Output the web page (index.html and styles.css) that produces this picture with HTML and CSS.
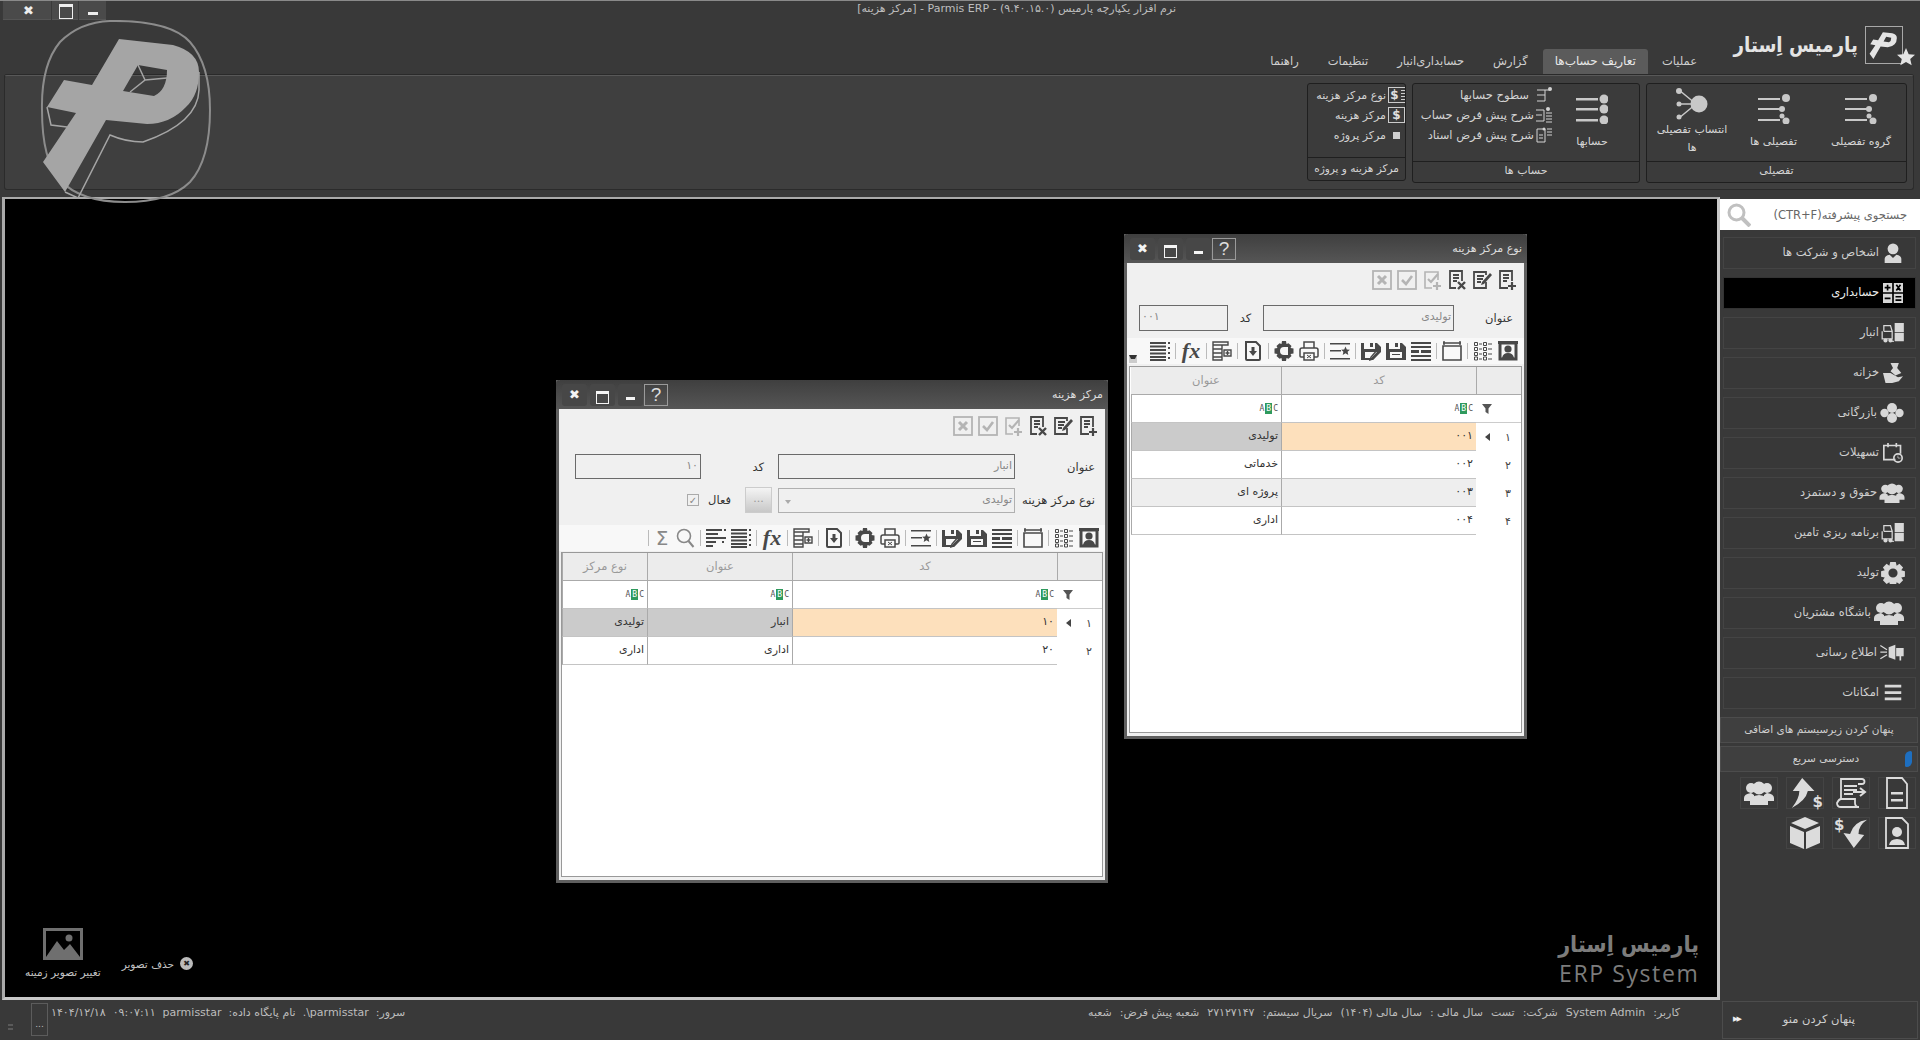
FILE: index.html
```
<!DOCTYPE html>
<html lang="fa" dir="rtl">
<head>
    <meta charset="utf-8">
    <title>Parmis ERP</title>
    <link rel="stylesheet" href="styles.css">
</head>
<body>
    <svg class="defs" width="0" height="0">
        <!-- shared icons -->
        <symbol id="p-mark" viewBox="40 20 171 183"><path fill-rule="evenodd" d="M119 39L173 45Q199 52 199 72Q199 95 186 107Q170 124 147 124L106 120L65 192L43 162L76 113L47 107L64 80L92 85ZM138 65L123 91L154 96Q167 90 167 70Z"/></symbol>
        <symbol id="doc-new" viewBox="0 0 20 20"><path fill="none" stroke="currentColor" stroke-width="1.8" d="M11 18H3V1h12v10M6 5h6M6 8h6M6 11h4"/><path fill="none" stroke="currentColor" stroke-width="2.2" d="M15 12v8M11 16h8"/></symbol>
        <symbol id="doc-edit" viewBox="0 0 20 20"><path fill="none" stroke="currentColor" stroke-width="1.8" d="M14 12v6H2V2h12v3M5 6h7M5 9h6M5 12h4"/><path fill="currentColor" d="M18 3l2 2-8 9-3 1 1-3z"/></symbol>
        <symbol id="doc-del" viewBox="0 0 20 20"><path fill="none" stroke="currentColor" stroke-width="1.8" d="M9 18H3V1h12v10M6 5h6M6 8h6M6 11h4"/><path fill="none" stroke="currentColor" stroke-width="2.4" d="M11 12l7 7M18 12l-7 7"/></symbol>
        <symbol id="add-ok" viewBox="0 0 20 20"><path fill="none" stroke="currentColor" stroke-width="1.6" d="M10 18H3V2h13v8"/><path fill="none" stroke="currentColor" stroke-width="2.2" d="M6 9l3 3 7-8M15 12v8M11 16h8"/></symbol>
        <symbol id="ok-box" viewBox="0 0 20 20"><rect x="1" y="1" width="18" height="18" fill="none" stroke="currentColor" stroke-width="1.8"/><path fill="none" stroke="currentColor" stroke-width="2.6" d="M5 10l4 4 6-8"/></symbol>
        <symbol id="x-box" viewBox="0 0 20 20"><rect x="1" y="1" width="18" height="18" fill="none" stroke="currentColor" stroke-width="1.8"/><path fill="none" stroke="currentColor" stroke-width="3" d="M6 6l8 8M14 6l-8 8"/></symbol>
        <symbol id="person" viewBox="0 0 20 20"><path fill="none" stroke="currentColor" stroke-width="3" d="M2 2h16v16H2z"/><path fill="currentColor" d="M0 0h20v3H0z"/><circle cx="10" cy="8" r="3.6" fill="currentColor"/><path fill="currentColor" d="M4 17q1-5 6-5t6 5z"/></symbol>
        <symbol id="dot-grid" viewBox="0 0 20 20"><path fill="none" stroke="currentColor" d="M1.500 1.500h3v3h-3zM1.500 6.500h3v3h-3zM1.500 11.500h3v3h-3zM1.500 16h3v3h-3zM10.500 1.500h3v3h-3zM10.500 6.500h3v3h-3zM10.500 11.500h3v3h-3zM10.500 16h3v3h-3z"/><path stroke="currentColor" d="M6 3h3M15 3h4M6 8h3M15 8h4M6 13h3M15 13h4M6 18h3M15 18h4"/></symbol>
        <symbol id="frame" viewBox="0 0 20 20"><path fill="none" stroke="currentColor" stroke-width="1.6" d="M1 5h18v14H1z"/><path fill="none" stroke="currentColor" stroke-width="1.4" d="M1 2h18M2 0v4M18 0v4"/></symbol>
        <symbol id="table" viewBox="0 0 20 20"><path fill="currentColor" d="M0 1h20v2H0zM0 5h20v2H0zM0 9h8v3H0zM10 9h10v3H10zM0 14h20v2H0zM0 18h20v2H0z"/></symbol>
        <symbol id="save" viewBox="0 0 20 20"><path fill="currentColor" fill-rule="evenodd" d="M0 2h3v6h11V2h2l4 4v13H0zM9 2h3v4H9zM4 11v6h12v-6zM6 13h8v1H6z"/></symbol>
        <symbol id="save-edit" viewBox="0 0 20 20"><path fill="currentColor" fill-rule="evenodd" d="M0 2h3v6h11V2h2l4 4v5l-8 8H0zM9 2h3v4H9zM4 11v6h6l6-6z"/><path fill="none" stroke="currentColor" stroke-width="1.4" d="M19 10l-7 8-3 1 1-3 7-8"/></symbol>
        <symbol id="lines-star" viewBox="0 0 20 20"><path fill="currentColor" d="M0 2h20v1.600H0zM0 9h11v1.600H0zM0 17h20v1.600H0zM15.500 5.500l1.300 2.900 3.100.3-2.300 2.100.7 3.100-2.800-1.600-2.800 1.600.7-3.100-2.300-2.100 3.100-.3z"/></symbol>
        <symbol id="printer" viewBox="0 0 20 20"><path fill="none" stroke="currentColor" stroke-width="1.5" d="M5 7V1h10v6M5 16H2q-1 0-1-1V9q0-2 2-2h14q2 0 2 2v6q0 1-1 1h-3M5 12h10v7H5z"/><path stroke="currentColor" d="M8 14l4 3M12 14l-4 3"/></symbol>
        <symbol id="gear" viewBox="0 0 20 20"><path fill="currentColor" fill-rule="evenodd" d="M8 0h4l.5 3 2-.8 3 2.800-1 2 3 .5v5l-3 .5 1 2-3 2.800-2-.8-.5 3H8l-.5-3-2 .8-3-2.800 1-2-3-.5v-5l3-.5-1-2 3-2.800 2 .8zM10 6a4 4 0 0 0 0 8h4V6z"/></symbol>
        <symbol id="doc-down" viewBox="0 0 20 20"><path fill="none" stroke="currentColor" stroke-width="2" d="M3 1h10l4 4v13q0 1-1 1H4q-1 0-1-1z"/><path fill="currentColor" d="M8.500 6h3v4h2.500l-4 5-4-5h2.500z"/></symbol>
        <symbol id="table-add" viewBox="0 0 20 20"><path fill="none" stroke="currentColor" stroke-width="1.400" d="M1 1h15v3H1zM1 4v15h9V4M1 8h9M1 12h9M1 16h9"/><path fill="none" stroke="currentColor" stroke-width="1.400" d="M12 9h7v6h-7zM15.500 10v4M13.500 12h4"/></symbol>
        <symbol id="lines" viewBox="0 0 20 20"><path fill="currentColor" d="M0 1h16v2H0zM0 4.500h16v2H0zM0 8h16v2H0zM0 11.500h16v2H0zM0 15h16v2H0zM0 18h16v2H0zM18 1h2v2h-2zM18 6h2v2h-2zM18 11h2v2h-2zM18 16h2v2h-2z"/></symbol>
        <symbol id="lines-steps" viewBox="0 0 20 20"><path fill="currentColor" d="M0 1h16v2H0zM0 5h12v2H0zM0 9h20v2H0zM0 13h10v2H0zM0 17h7v2H0zM18 1h2v2h-2zM16 13h2v2h-2z"/></symbol>
        <symbol id="lens" viewBox="0 0 20 20"><circle cx="9" cy="8" r="6.500" fill="none" stroke="currentColor" stroke-width="1.600"/><path stroke="currentColor" stroke-width="2" d="M13.500 13l5 6"/></symbol>
        <symbol id="lens-bold" viewBox="0 0 24 24"><circle cx="9.500" cy="9.500" r="7.500" fill="none" stroke="currentColor" stroke-width="3"/><path stroke="currentColor" stroke-width="4" d="M15 15l8 8"/></symbol>
        <symbol id="funnel" viewBox="0 0 10 10"><path fill="currentColor" d="M0 0h10L6.500 4.500V10l-3-2V4.500z"/></symbol>
        <symbol id="star" viewBox="0 0 20 20"><path fill="currentColor" d="M10 0l3 7 7 .6-5.300 4.600 1.600 7-6.300-3.700-6.300 3.700 1.600-7L0 7.600 7 7z"/></symbol>
        <symbol id="rows" viewBox="0 0 32 30"><path fill="currentColor" d="M0 4h22v2H0zM0 14h22v2H0zM0 25h22v2H0z"/><circle cx="28" cy="4" r="4" fill="currentColor"/><circle cx="24" cy="15" r="3" fill="currentColor"/><circle cx="24" cy="22" r="2.500" fill="currentColor"/><circle cx="28" cy="27" r="3.500" fill="currentColor"/></symbol>
        <symbol id="rows-even" viewBox="0 0 32 30"><path fill="currentColor" d="M0 4h22v2.500H0zM0 14h22v2.500H0zM0 25h22v2.500H0z"/><circle cx="28" cy="5" r="4.500" fill="currentColor"/><circle cx="28" cy="15" r="4.500" fill="currentColor"/><circle cx="28" cy="26" r="4.500" fill="currentColor"/></symbol>
        <symbol id="hub" viewBox="0 0 32 32"><path stroke="currentColor" stroke-width="1.500" d="M3 2l17 14M2 16h18M3 30l17-14"/><circle cx="3" cy="3" r="3" fill="currentColor"/><circle cx="3" cy="16" r="2.500" fill="currentColor"/><circle cx="3" cy="29" r="2.500" fill="currentColor"/><circle cx="23" cy="16" r="8.500" fill="currentColor"/></symbol>
        <symbol id="level" viewBox="0 0 16 16"><path fill="none" stroke="currentColor" d="M1 3h13M9 3v11M1 8h8M1 14h8"/><circle cx="14" cy="2" r="2" fill="currentColor"/></symbol>
        <symbol id="level-list" viewBox="0 0 16 16"><path fill="none" stroke="currentColor" d="M0 3h8v11H0M0 8h6M10 6h6M10 9h6M10 12h6M10 15h6"/><circle cx="12" cy="2" r="2" fill="currentColor"/></symbol>
        <symbol id="doc-list" viewBox="0 0 16 16"><path fill="none" stroke="currentColor" d="M1 2h8v13H1zM3 8h4M3 11h4M11 2h5M11 5h5M11 8h5"/><circle cx="8" cy="2" r="1.500" fill="currentColor"/></symbol>
        <symbol id="user" viewBox="0 0 24 24"><circle cx="12" cy="7" r="6.500" fill="currentColor"/><path fill="currentColor" d="M2 24v-5q0-4 6-5l4 4 4-4q6 1 6 5v5z"/></symbol>
        <symbol id="calc" viewBox="0 0 24 24"><path fill="currentColor" d="M0 0h11v11H0zM13 0h11v11H13zM0 13h11v11H0zM13 13h11v11H13z"/><path stroke="#000" stroke-width="2" d="M5.500 2v7M2 5.500h7M16 2l5 7M21 2l-5 7M2 18.500h7M15 16.500h7M15 20.500h7"/></symbol>
        <symbol id="forklift" viewBox="0 0 26 24"><path fill="currentColor" d="M15 0h11v11H15zM15 12h11v10H15z"/><path fill="none" stroke="currentColor" stroke-width="1.500" d="M2 10V3h8l2 7v9M12 22h2M2 10h10v9H0v-9"/><circle cx="4" cy="21" r="2.500" fill="currentColor"/><circle cx="10" cy="21" r="2.500" fill="currentColor"/></symbol>
        <symbol id="hand" viewBox="0 0 24 24"><path fill="currentColor" d="M9 0h10l-2 6 5 6-7 3-6-5 3-4zM0 12h9l9 5 6-1-5 6-8 2H3z"/></symbol>
        <symbol id="coins" viewBox="0 0 28 24"><circle cx="14" cy="6" r="6" fill="currentColor"/><circle cx="14" cy="18" r="6" fill="currentColor"/><circle cx="5" cy="12" r="5" fill="currentColor"/><circle cx="23" cy="12" r="5" fill="currentColor"/></symbol>
        <symbol id="cal-clock" viewBox="0 0 24 24"><path fill="none" stroke="currentColor" stroke-width="2" d="M15 20H1V3h20v10M6 0v5M16 0v5"/><circle cx="18" cy="18" r="5" fill="none" stroke="currentColor" stroke-width="2"/><path stroke="currentColor" d="M18 15v3h3"/></symbol>
        <symbol id="team" viewBox="0 0 30 24"><circle cx="7" cy="7" r="5" fill="currentColor"/><circle cx="23" cy="7" r="5" fill="currentColor"/><path fill="currentColor" d="M0 20v-3q0-4 7-5l3 2v6zM30 20v-3q0-4-7-5l-3 2v6z"/><circle cx="15" cy="7" r="6.500" fill="currentColor"/><path fill="currentColor" d="M6 24v-4q0-5 9-6 9 1 9 6v4z"/></symbol>
        <symbol id="cog" viewBox="0 0 24 24"><path fill="currentColor" fill-rule="evenodd" d="M9 0h6l1 4 3-2 4 4-2 3 4 1v6l-4 1 2 3-4 4-3-2-1 4H9l-1-4-3 2-4-4 2-3-4-1v-6l4-1-2-3 4-4 3 2zM12 7a5 5 0 1 0 0 10 5 5 0 0 0 0-10z"/></symbol>
        <symbol id="horn" viewBox="0 0 28 24"><path fill="currentColor" d="M10 5l8-3v18l-8-3zM19 6h9v10h-3v5h-2v-5h-4z"/><path stroke="currentColor" stroke-width="1.500" d="M0 3l8 5M0 11h8M0 19l8-5"/></symbol>
        <symbol id="burger" viewBox="0 0 24 24"><path fill="currentColor" d="M3 3h18v3H3zM3 10h18v3H3zM3 17h18v3H3z"/></symbol>
        <symbol id="q-doc" viewBox="0 0 32 32"><path fill="none" stroke="currentColor" stroke-width="1.800" d="M6 1h15l5 6v24H6z"/><path fill="currentColor" d="M10 15h12v2.500H10zM10 22h12v2.500H10z"/></symbol>
        <symbol id="q-scroll" viewBox="0 0 32 32"><path fill="none" stroke="currentColor" stroke-width="1.800" d="M6 22V2h21M27 2a2.500 2.500 0 0 1 0 5H23M2 26q2-4 4-4h14v4q0 4 4 4H6q-4 0-4-4z"/><path fill="currentColor" d="M9 8h13v2H9zM9 12h13v2H9zM9 16h9v2H9z"/><path fill="none" stroke="currentColor" stroke-width="2" d="M18 15h11M25 11l5 4-5 4"/></symbol>
        <symbol id="q-up" viewBox="0 0 34 32"><path fill="currentColor" d="M14 0l13 14h-7q-2 10-17 18 8-10 8-18H4z"/></symbol>
        <symbol id="q-down" viewBox="0 0 34 32"><path fill="currentColor" d="M34 2q-14 2-18 15l-7-1 11 16 11-14-6-1q0-9 9-15z"/></symbol>
        <symbol id="q-id" viewBox="0 0 32 32"><path fill="none" stroke="currentColor" stroke-width="1.800" d="M5 1h16l6 6v24H5z"/><circle cx="16" cy="15" r="5" fill="currentColor"/><path fill="currentColor" d="M8 28q1-6 8-6t8 6z"/></symbol>
        <symbol id="q-box" viewBox="0 0 32 32"><path fill="currentColor" d="M16 0l14 6-14 6L2 6zM1 9l14 6v17L1 26zM31 9l-14 6v17l14-6z"/></symbol>
        <symbol id="photo" viewBox="0 0 40 32"><path fill="#6f6f6f" d="M0 0h40v32H0z"/><path fill="#000" d="M3 3h34v26H3z"/><path fill="#6f6f6f" d="M3 29l11-16 7 9 6-6 10 13z"/><circle cx="26" cy="10" r="3.500" fill="#6f6f6f"/></symbol>
    </svg>

    <div class="watermark">
        <svg viewBox="0 0 171 183" width="171" height="183">
            <path fill="none" stroke="#8c8c8c" stroke-width="2" d="M70 1Q130 0 150 22Q170 45 170 90Q170 140 150 162Q130 182 85 182Q40 182 20 160Q2 140 2 90Q1 45 20 22Q40 2 70 1Z"/>
            <use href="#p-mark" x="0" y="0" width="171" height="183" fill="#a5a5a5"/>
            <path fill="none" stroke="#a5a5a5" stroke-width="1.500" d="M159 52L159 70Q158 103 103 122Q86 122 70 115L38 178L25 172M7 87L11 105L27 107M98 45L105 60L90 72M105 60L127 58"/>
        </svg>
    </div>

    <header class="chrome">
        <div class="titlebar">
            <span class="app-title">نرم افزار یکپارچه پارمیس (۹.۴۰.۱۵.۰) - Parmis ERP - [مرکز هزینه]</span>
            <div class="app-btns">
                <span class="app-btn app-min"></span>
                <span class="app-btn app-max"></span>
                <span class="app-btn app-close">✖</span>
            </div>
        </div>
        <div class="menu-row">
            <div class="brand">
                <div class="brand-mark">
                    <svg width="32" height="32" class="brand-p"><use href="#p-mark"/></svg>
                    <svg width="18" height="18" class="brand-star"><use href="#star"/></svg>
                </div>
                <span class="brand-name">پارمیس اِستار</span>
            </div>
            <nav class="tabs">
                <span class="tab">عملیات</span>
                <span class="tab tab-on">تعاریف حساب‌ها</span>
                <span class="tab">گزارش</span>
                <span class="tab">حسابداری‌انبار</span>
                <span class="tab">تنظیمات</span>
                <span class="tab">راهنما</span>
            </nav>
        </div>
        <div class="ribbon">
            <section class="rgroup rgroup-a">
                <div class="rgroup-body">
                    <div class="rbig rbig-first"><svg width="32" height="30"><use href="#rows"/></svg><span>گروه تفصیلی</span></div>
                    <div class="rbig"><svg width="32" height="30"><use href="#rows"/></svg><span>تفصیلی ها</span></div>
                    <div class="rbig rbig-wrap"><svg width="32" height="32"><use href="#hub"/></svg><span>انتساب تفصیلی<br>ها</span></div>
                </div>
                <div class="rgroup-foot">تفصیلی</div>
            </section>
            <section class="rgroup rgroup-b">
                <div class="rgroup-body">
                    <div class="rbig rbig-acc"><svg width="32" height="30"><use href="#rows-even"/></svg><span>حسابها</span></div>
                    <div class="rsmall-list rsmall-list-b">
                        <div class="rsmall"><svg width="16" height="16"><use href="#level"/></svg><span class="rsmall-gap">سطوح حسابها</span></div>
                        <div class="rsmall"><svg width="16" height="16"><use href="#level-list"/></svg><span>شرح پیش فرض حساب</span></div>
                        <div class="rsmall"><svg width="16" height="16"><use href="#doc-list"/></svg><span>شرح پیش فرض اسناد</span></div>
                    </div>
                </div>
                <div class="rgroup-foot">حساب ها</div>
            </section>
            <section class="rgroup rgroup-c">
                <div class="rgroup-body">
                    <div class="rsmall-list rsmall-list-c">
                        <div class="rsmall"><span class="dollar dollar-list">$</span><span>نوع مرکز هزینه</span></div>
                        <div class="rsmall"><span class="dollar">$</span><span>مرکز هزینه</span></div>
                        <div class="rsmall"><span class="square-dot"></span><span>مرکز پروژه</span></div>
                    </div>
                </div>
                <div class="rgroup-foot rgroup-foot-low">مرکز هزینه و پروژه</div>
            </section>
        </div>
    </header>

    <div class="main">
        <aside class="sidebar">
            <div class="search">
                <span>جستجوی پیشرفته(CTR+F)</span>
                <svg width="24" height="24"><use href="#lens-bold"/></svg>
            </div>
            <div class="side-list">
                <a class="side-item"><svg width="24" height="20"><use href="#user"/></svg>اشخاص و شرکت ها</a>
                <a class="side-item side-on"><svg width="24" height="20"><use href="#calc"/></svg>حسابداری</a>
                <a class="side-item"><svg width="24" height="20"><use href="#forklift"/></svg>انبار</a>
                <a class="side-item"><svg width="24" height="20"><use href="#hand"/></svg>خزانه</a>
                <a class="side-item"><svg width="26" height="20"><use href="#coins"/></svg>بازرگانی</a>
                <a class="side-item"><svg width="24" height="20"><use href="#cal-clock"/></svg>تسهیلات</a>
                <a class="side-item"><svg width="26" height="20"><use href="#team"/></svg>حقوق و دستمزد</a>
                <a class="side-item"><svg width="24" height="20"><use href="#forklift"/></svg>برنامه ریزی تامین</a>
                <a class="side-item"><svg width="24" height="22"><use href="#cog"/></svg>تولید</a>
                <a class="side-item"><svg width="32" height="24"><use href="#team"/></svg>باشگاه مشتریان</a>
                <a class="side-item"><svg width="26" height="20"><use href="#horn"/></svg>اطلاع رسانی</a>
                <a class="side-item"><svg width="24" height="22"><use href="#burger"/></svg>امکانات</a>
            </div>
            <div class="side-band">پنهان کردن زیرسیستم های اضافی</div>
            <div class="side-band side-band-pin">دسترسی سریع<i class="pin"></i></div>
            <div class="quick">
                <span class="quick-cell"><svg width="32" height="32"><use href="#q-doc"/></svg></span>
                <span class="quick-cell"><svg width="32" height="32"><use href="#q-scroll"/></svg></span>
                <span class="quick-cell quick-money"><svg width="32" height="32"><use href="#q-up"/></svg><b>$</b></span>
                <span class="quick-cell"><svg width="30" height="24"><use href="#team"/></svg></span>
                <span class="quick-cell"><svg width="32" height="32"><use href="#q-id"/></svg></span>
                <span class="quick-cell quick-money quick-money-down"><svg width="32" height="32"><use href="#q-down"/></svg><b>$</b></span>
                <span class="quick-cell"><svg width="32" height="32"><use href="#q-box"/></svg></span>
            </div>
            <div class="hide-menu"><span>پنهان کردن منو</span><i class="ffwd">▶▶</i></div>
        </aside>

        <div class="workspace">
            <div class="desktop">

                <div class="win win-type">
                    <div class="win-title">
                        <span>نوع مرکز هزینه</span>
                        <div class="win-btns">
                            <span class="win-help">?</span>
                            <span class="win-btn win-min"></span>
                            <span class="win-btn win-max"></span>
                            <span class="win-btn win-x">✖</span>
                        </div>
                    </div>
                    <div class="tools">
                        <svg class="t"><use href="#doc-new"/></svg>
                        <svg class="t"><use href="#doc-edit"/></svg>
                        <svg class="t"><use href="#doc-del"/></svg>
                        <svg class="t t-off"><use href="#add-ok"/></svg>
                        <svg class="t t-off"><use href="#ok-box"/></svg>
                        <svg class="t t-off"><use href="#x-box"/></svg>
                    </div>
                    <div class="form form-type">
                        <div class="form-row">
                            <label class="lbl lbl-type">عنوان</label>
                            <div class="input input-type-title">تولیدی</div>
                            <label class="lbl lbl-code-type">کد</label>
                            <div class="input input-type-code">۰۰۱</div>
                        </div>
                    </div>
                    <div class="bar">
                        <svg class="t"><use href="#person"/></svg>
                        <svg class="t"><use href="#dot-grid"/></svg>
                        <i class="sep"></i>
                        <svg class="t"><use href="#frame"/></svg>
                        <i class="sep"></i>
                        <svg class="t"><use href="#table"/></svg>
                        <svg class="t"><use href="#save"/></svg>
                        <svg class="t"><use href="#save-edit"/></svg>
                        <i class="sep"></i>
                        <svg class="t"><use href="#lines-star"/></svg>
                        <i class="sep"></i>
                        <svg class="t"><use href="#printer"/></svg>
                        <svg class="t"><use href="#gear"/></svg>
                        <i class="sep"></i>
                        <svg class="t"><use href="#doc-down"/></svg>
                        <i class="sep"></i>
                        <svg class="t"><use href="#table-add"/></svg>
                        <i class="sep"></i>
                        <span class="fx">fx</span>
                        <i class="sep"></i>
                        <svg class="t"><use href="#lines"/></svg>
                        <i class="bar-more"></i>
                    </div>
                    <div class="grid-wrap">
                        <div class="grid grid-type">
                            <div class="th"></div><div class="th">کد</div><div class="th">عنوان</div>
                            <div class="rh rh-filter"><svg class="funnel"><use href="#funnel"/></svg></div><div class="td td-filter"><span class="abc">A<b>B</b>C</span></div><div class="td td-filter"><span class="abc">A<b>B</b>C</span></div>
                            <div class="rh"><span>۱</span><i class="cur"></i></div><div class="td td-cur">۰۰۱</div><div class="td td-sel">تولیدی</div>
                            <div class="rh"><span>۲</span></div><div class="td">۰۰۲</div><div class="td">خدماتی</div>
                            <div class="rh"><span>۳</span></div><div class="td td-alt">۰۰۳</div><div class="td td-alt">پروژه ای</div>
                            <div class="rh"><span>۴</span></div><div class="td">۰۰۴</div><div class="td">اداری</div>
                        </div>
                    </div>
                </div>

                <div class="win win-center">
                    <div class="win-title">
                        <span>مرکز هزینه</span>
                        <div class="win-btns">
                            <span class="win-help">?</span>
                            <span class="win-btn win-min"></span>
                            <span class="win-btn win-max"></span>
                            <span class="win-btn win-x">✖</span>
                        </div>
                    </div>
                    <div class="tools">
                        <svg class="t"><use href="#doc-new"/></svg>
                        <svg class="t"><use href="#doc-edit"/></svg>
                        <svg class="t"><use href="#doc-del"/></svg>
                        <svg class="t t-off"><use href="#add-ok"/></svg>
                        <svg class="t t-off"><use href="#ok-box"/></svg>
                        <svg class="t t-off"><use href="#x-box"/></svg>
                    </div>
                    <div class="form form-center">
                        <div class="form-row">
                            <label class="lbl lbl-center">عنوان</label>
                            <div class="input input-center-title">انبار</div>
                            <label class="lbl lbl-code-center">کد</label>
                            <div class="input input-center-code">۱۰</div>
                        </div>
                        <div class="form-row">
                            <label class="lbl lbl-center">نوع مرکز هزینه</label>
                            <div class="input input-center-title input-off">تولیدی<i class="combo-arrow"></i></div>
                            <span class="more-btn">...</span>
                            <label class="lbl lbl-active">فعال</label>
                            <span class="check">✓</span>
                        </div>
                    </div>
                    <div class="bar">
                        <svg class="t"><use href="#person"/></svg>
                        <svg class="t"><use href="#dot-grid"/></svg>
                        <i class="sep"></i>
                        <svg class="t"><use href="#frame"/></svg>
                        <i class="sep"></i>
                        <svg class="t"><use href="#table"/></svg>
                        <svg class="t"><use href="#save"/></svg>
                        <svg class="t"><use href="#save-edit"/></svg>
                        <i class="sep"></i>
                        <svg class="t"><use href="#lines-star"/></svg>
                        <i class="sep"></i>
                        <svg class="t"><use href="#printer"/></svg>
                        <svg class="t"><use href="#gear"/></svg>
                        <i class="sep"></i>
                        <svg class="t"><use href="#doc-down"/></svg>
                        <i class="sep"></i>
                        <svg class="t"><use href="#table-add"/></svg>
                        <i class="sep"></i>
                        <span class="fx">fx</span>
                        <i class="sep"></i>
                        <svg class="t"><use href="#lines"/></svg>
                        <svg class="t"><use href="#lines-steps"/></svg>
                        <i class="sep"></i>
                        <svg class="t t-soft"><use href="#lens"/></svg>
                        <span class="sigma">Σ</span>
                        <i class="sep"></i>
                    </div>
                    <div class="grid-wrap">
                        <div class="grid grid-center">
                            <div class="th"></div><div class="th">کد</div><div class="th">عنوان</div><div class="th">نوع مرکز</div>
                            <div class="rh rh-filter"><svg class="funnel"><use href="#funnel"/></svg></div><div class="td td-filter"><span class="abc">A<b>B</b>C</span></div><div class="td td-filter"><span class="abc">A<b>B</b>C</span></div><div class="td td-filter"><span class="abc">A<b>B</b>C</span></div>
                            <div class="rh"><span>۱</span><i class="cur"></i></div><div class="td td-cur">۱۰</div><div class="td td-sel">انبار</div><div class="td td-sel">تولیدی</div>
                            <div class="rh"><span>۲</span></div><div class="td">۲۰</div><div class="td">اداری</div><div class="td">اداری</div>
                        </div>
                    </div>
                </div>

                <div class="wall-brand">
                    <span class="wall-name">پارمیس اِستار</span>
                    <span class="wall-sub">ERP System</span>
                </div>
                <div class="wall-tools">
                    <div class="wall-del"><i class="wall-del-x">✖</i><span>حذف تصویر</span></div>
                    <div class="wall-change"><svg width="40" height="32"><use href="#photo"/></svg><span>تغییر تصویر زمینه</span></div>
                </div>
            </div>

            <footer class="status">
                <div class="status-text">
                    <span>کاربر:</span><span>System Admin</span><span>شرکت:</span><span>تست</span><span>سال مالی :</span><span>سال مالی (۱۴۰۴)</span><span>سریال سیستم:</span><span>۲۷۱۲۷۱۴۷</span><span>شعبه پیش فرض:</span><span>شعبه</span>
                </div>
                <div class="status-text status-left">
                    <span>سرور:</span><bdi dir="ltr">.\parmisstar</bdi><span>نام پایگاه داده:</span><span>parmisstar</span><span>۰۹:۰۷:۱۱</span><span>۱۴۰۴/۱۲/۱۸</span>
                </div>
                <span class="status-btn">...</span>
                <span class="grip"></span>
            </footer>
        </div>
    </div>
</body>
</html>
```
FILE: styles.css
```
* {
    margin: 0;
    padding: 0;
    box-sizing: border-box;
    font-family: "DejaVu Sans", sans-serif;
}

body {
    width: 1920px;
    height: 1040px;
    overflow: hidden;
    position: relative;
    background: #393939;
    color: #cfcfcf;
    font-size: 11px;
}

.defs { position: absolute; }

svg { display: block; flex: none; }

/* ---------- top chrome ---------- */

.chrome {
    height: 197px;
    border-top: 1px solid #8a8a8a;
    background: #393939;
    display: flex;
    flex-direction: column;
}

.watermark {
    position: absolute;
    left: 40px;
    top: 20px;
    z-index: 5;
}

.titlebar {
    height: 19px;
    display: flex;
    align-items: flex-start;
    padding-right: 744px;
    flex: none;
}

.app-title {
    white-space: nowrap;
    font-size: 11px;
    line-height: 16px;
    color: #bdbdbd;
}

.app-btns {
    margin-right: auto;
    display: flex;
    height: 19px;
    margin-left: 2px;
    background: #4a4a4a;
    border-bottom: 1px solid #555;
}

.app-btn {
    width: 28px;
    height: 19px;
    color: #eee;
    text-align: center;
    border-left: 1px solid #3a3a3a;
    position: relative;
}

.app-min::after {
    content: "";
    position: absolute;
    left: 9px;
    top: 11px;
    width: 10px;
    height: 3px;
    background: #eee;
}

.app-max {
    width: 27px;
}

.app-max::after {
    content: "";
    position: absolute;
    left: 7px;
    top: 3px;
    width: 12px;
    height: 11px;
    border: 1px solid #eee;
    border-top-width: 3px;
}

.app-close {
    width: 49px;
    font-size: 13px;
    line-height: 19px;
    padding-left: 3px;
}

.menu-row {
    height: 55px;
    display: flex;
    align-items: flex-end;
    flex: none;
}

.brand {
    width: 208px;
    height: 48px;
    flex: none;
    align-self: flex-start;
    padding-top: 6px;
    padding-right: 6px;
    display: flex;
    gap: 6px;
    color: #e4e4e4;
}

.brand-mark {
    width: 50px;
    height: 42px;
    flex: none;
    position: relative;
}

.brand-p {
    position: absolute;
    right: 11px;
    top: 0;
    width: 38px;
    height: 38px;
    padding: 2px;
    border: 1px solid #a8a8a8;
    fill: #e4e4e4;
}

.brand-star {
    position: absolute;
    right: -1px;
    top: 22px;
    color: #e4e4e4;
}

.brand-name {
    font-size: 21px;
    font-weight: bold;
    line-height: 38px;
    white-space: nowrap;
    transform: scaleX(.87);
    transform-origin: right center;
}

.tabs {
    display: flex;
    height: 26px;
}

.tab {
    padding: 0 15px 0 14px;
    line-height: 24px;
    font-size: 11.5px;
    white-space: nowrap;
    border-radius: 3px 3px 0 0;
}

.tab-on {
    background: #5b5b5b;
    color: #e8e8e8;
    padding: 0 12px;
    font-size: 12px;
}

.ribbon {
    height: 115px;
    flex: none;
    margin: 0 6px 0 4px;
    padding: 7px 6px 0 0;
    background: #3f3f3f;
    border: 1px solid #2b2b2b;
    border-top-color: #585858;
    border-radius: 3px;
    box-shadow: 0 -1px 0 #2a2a2a;
    display: flex;
    gap: 6px;
    align-items: flex-start;
}

.rgroup {
    height: 100px;
    background: #3b3b3b;
    border: 1px solid #1f1f1f;
    border-radius: 3px;
    display: flex;
    flex-direction: column;
}

.rgroup-a { width: 261px; }
.rgroup-b { width: 228px; }
.rgroup-c { width: 99px; height: 98px; }

.rgroup-body {
    flex: 1;
    display: flex;
}

.rgroup-foot {
    height: 21px;
    flex: none;
    border-top: 1px solid #1f1f1f;
    text-align: center;
    line-height: 17px;
    font-size: 11px;
    color: #d4d4d4;
}

.rgroup-foot-low {
    height: 23px;
    line-height: 20px;
    white-space: nowrap;
    font-size: 10.5px;
}

.rbig {
    width: 85px;
    padding-top: 10px;
    display: flex;
    flex-direction: column;
    align-items: center;
    color: #c8c8c8;
    text-align: center;
    line-height: 18px;
    gap: 9px;
}

.rbig span { color: #d6d6d6; font-size: 11px; white-space: nowrap; }

.rbig-first { width: 90px; }

.rbig-wrap {
    width: 78px;
    padding-top: 4px;
    gap: 1px;
}

.rbig-acc { width: 94px; }

.rsmall-list {
    padding-top: 1px;
    display: flex;
    flex-direction: column;
}

.rsmall-list-b {
    margin-right: -7px;
    font-size: 11.5px;
}

.rsmall {
    height: 20px;
    display: flex;
    align-items: center;
    gap: 2px;
    white-space: nowrap;
    color: #d4d4d4;
}

.rsmall span { font-size: 11px; }
.rsmall-list-b .rsmall span { font-size: 11.5px; }

.rsmall-gap { margin-right: 5px; }

.dollar {
    width: 17px;
    height: 16px;
    border: 1px solid #ccc;
    color: #e0e0e0;
    font-weight: bold;
    font-size: 12px !important;
    line-height: 14px;
    text-align: center;
    flex: none;
}

.dollar-list {
    border-right: 0;
    padding-right: 5px;
    background: repeating-linear-gradient(#ccc 0 1px, transparent 1px 3px) right center / 4px 11px no-repeat;
}

.square-dot {
    width: 7px;
    height: 7px;
    margin: 0 5px;
    background: #d0d0d0;
    flex: none;
}

/* ---------- main area ---------- */

.main {
    height: 843px;
    display: flex;
}

.sidebar {
    width: 200px;
    flex: none;
    padding-top: 2px;
    display: flex;
    flex-direction: column;
    position: relative;
}

.search {
    height: 31px;
    background: #fff;
    color: #666;
    display: flex;
    align-items: center;
    justify-content: space-between;
    padding: 0 13px 0 7px;
    font-size: 11.5px;
    flex: none;
}

.search svg { color: #c0c0c0; }

.side-list {
    margin: 7px 4px 0 3px;
    display: flex;
    flex-direction: column;
    gap: 8px;
}

.side-item {
    height: 32px;
    border: 1px solid #444;
    display: flex;
    align-items: center;
    gap: 2px;
    padding: 0 10px 3px 0;
    font-size: 11.5px;
    color: #cfcfcf;
    background: #383838;
    white-space: nowrap;
}

.side-item svg {
    color: #d8d8d8;
    margin-top: 2px;
}

.side-on {
    background: #000;
    border-color: #333;
    color: #eee;
}

.side-band {
    height: 26px;
    margin: 0 2px 3px 0;
    background: #3f3f3f;
    border: 1px solid #4c4c4c;
    text-align: center;
    line-height: 23px;
    font-size: 10.5px;
    position: relative;
}

.side-list + .side-band { margin-top: 8px; }

.side-band-pin { padding-left: 14px; }

.pin {
    position: absolute;
    left: 184px;
    top: 4px;
    width: 7px;
    height: 16px;
    background: #1e6fc0;
    border-radius: 7px 2px 7px 2px;
}

.quick {
    margin: 2px 4px 0 0;
    display: grid;
    grid-template-columns: repeat(4, 38px);
    grid-auto-rows: 32px;
    column-gap: 8px;
    row-gap: 8px;
}

.quick-cell {
    border: 1px solid #444;
    color: #dcdcdc;
    display: flex;
    align-items: center;
    justify-content: center;
    position: relative;
}

.quick-money b {
    position: absolute;
    right: 0;
    bottom: -2px;
    font-size: 15px;
    line-height: 15px;
    color: #dcdcdc;
}

.quick-money-down b {
    right: auto;
    left: 1px;
    top: 0;
    bottom: auto;
}

.hide-menu {
    position: absolute;
    left: 2px;
    right: 2px;
    bottom: 1px;
    height: 38px;
    border: 1px solid #4c4c4c;
    display: flex;
    align-items: center;
    justify-content: space-between;
    padding: 0 62px 3px 10px;
    font-size: 11.5px;
}

.ffwd {
    font-style: normal;
    font-size: 7px;
    letter-spacing: -2px;
    color: #eee;
}

.workspace {
    flex: 1;
    display: flex;
    flex-direction: column;
}

.desktop {
    height: 803px;
    margin-left: 2px;
    background: #000;
    border: solid #c8c8c8;
    border-width: 2px 3px 3px;
    border-top-color: #aaa;
    border-left-color: #aaa;
    position: relative;
    flex: none;
}

.wall-brand {
    position: absolute;
    left: 1554px;
    top: 730px;
    width: 140px;
    display: flex;
    flex-direction: column;
    color: #7c7c7c;
    white-space: nowrap;
}

.wall-name {
    font-size: 23px;
    font-weight: bold;
    line-height: 30px;
    transform: scaleX(.9);
    transform-origin: right center;
}

.wall-sub {
    margin-top: 2px;
    font-size: 23px;
    line-height: 24px;
    letter-spacing: 1.6px;
    font-family: "Open Sans", sans-serif;
    text-align: left;
    direction: ltr;
}

.wall-tools {
    position: absolute;
    left: 20px;
    top: 729px;
    display: flex;
    align-items: flex-end;
    gap: 21px;
    color: #c4c4c4;
    font-size: 10.5px;
    white-space: nowrap;
}

.wall-change {
    display: flex;
    flex-direction: column;
    align-items: center;
    gap: 6px;
}

.wall-del {
    display: flex;
    align-items: center;
    gap: 6px;
    margin-bottom: 8px;
}

.wall-del-x {
    width: 13px;
    height: 13px;
    border-radius: 50%;
    background: #bbb;
    color: #222;
    font-style: normal;
    font-size: 8px;
    line-height: 13px;
    text-align: center;
}

.status {
    height: 40px;
    display: flex;
    align-items: flex-start;
    padding: 6px 40px 0 8px;
    color: #bdbdbd;
    font-size: 11px;
    flex: none;
}

.status-text {
    display: flex;
    gap: 8px;
    white-space: nowrap;
    height: 16px;
    line-height: 14px;
}

.status-left {
    margin-right: auto;
    margin-left: 3px;
    gap: 7px;
}

.status-btn {
    width: 17px;
    height: 33px;
    margin-top: -3px;
    margin-left: 18px;
    border: 1px solid #5c5c5c;
    text-align: center;
    line-height: 40px;
    font-size: 9px;
}

.grip {
    width: 5px;
    height: 8px;
    margin-top: 18px;
    background: repeating-linear-gradient(#5a5a5a 0 2px, transparent 2px 4px);
}

/* ---------- mdi windows ---------- */

.win {
    position: absolute;
    display: flex;
    flex-direction: column;
    background: #f0f0f0;
    border: 3px solid #5f5f5f;
    border-top: 0;
    color: #333;
}

.win-type {
    left: 1119px;
    top: 35px;
    width: 403px;
    height: 505px;
}

.win-center {
    left: 551px;
    top: 181px;
    width: 552px;
    height: 503px;
}

.win-title {
    height: 29px;
    margin: 0 -3px;
    flex: none;
    background: linear-gradient(#3f3f3f, #565656);
    border-radius: 4px 4px 0 0;
    color: #dcdcdc;
    display: flex;
    align-items: center;
    padding: 0 5px 0 6px;
    font-size: 11px;
}

.win-btns {
    margin-right: auto;
    display: flex;
    gap: 3px;
    flex-direction: row;
    align-items: center;
}

.win-btn {
    width: 25px;
    height: 22px;
    background: #474747;
    border-radius: 3px;
    color: #f4f4f4;
    position: relative;
    text-align: center;
    font-size: 13px;
    line-height: 22px;
}

.win-help {
    width: 24px;
    height: 22px;
    border: 1px solid #9a9a9a;
    color: #ddd;
    font-size: 19px;
    line-height: 20px;
    text-align: center;
    margin-left: -2px;
    font-family: "Liberation Sans", sans-serif;
}

.win-min::after {
    content: "";
    position: absolute;
    left: 8px;
    top: 13px;
    width: 9px;
    height: 3px;
    background: #f4f4f4;
}

.win-max::after {
    content: "";
    position: absolute;
    left: 6px;
    top: 7px;
    width: 11px;
    height: 9px;
    border: 1px solid #f4f4f4;
    border-top-width: 3px;
}

.tools {
    height: 27px;
    padding: 7px 7px 0 0;
    display: flex;
    gap: 5px;
    flex: none;
}

.t {
    width: 20px;
    height: 20px;
    color: #484848;
    flex: none;
}

.t-off { color: #b4b4b4; }
.t-soft { color: #888; }

.form {
    display: flex;
    flex-direction: column;
    gap: 8px;
    flex: none;
}

.form-type { padding-top: 15px; }
.form-center { padding-top: 18px; }

.form-row {
    display: flex;
    align-items: center;
}

.lbl {
    flex: none;
    font-size: 11.5px;
    color: #333;
    white-space: nowrap;
}

.lbl-type { width: 70px; padding-right: 11px; }
.lbl-code-type { width: 35px; text-align: center; }
.lbl-center { width: 90px; padding-right: 10px; }
.lbl-code-center { width: 77px; padding-right: 14px; }
.lbl-active { width: 21px; margin-right: 14px; }

.input {
    height: 26px;
    flex: none;
    border: 1px solid #6a6a6a;
    background: #f0f0f0;
    color: #888;
    font-size: 11px;
    line-height: 22px;
    padding: 0 2px;
    position: relative;
}

.input-type-title { width: 191px; }
.input-type-code { width: 89px; text-align: left; }
.input-center-title { width: 237px; height: 25px; }
.input-center-code { width: 126px; height: 25px; }

.input-off { border-color: #b0b0b0; }

.combo-arrow {
    position: absolute;
    left: 6px;
    top: 11px;
    border: 3px solid transparent;
    border-top: 4px solid #aaa;
}

.more-btn {
    width: 27px;
    height: 26px;
    margin-right: 6px;
    border: 1px solid #ccc;
    background: linear-gradient(#f4f4f4, #c8c8c8);
    color: #999;
    text-align: center;
    line-height: 22px;
    flex: none;
}

.check {
    width: 12px;
    height: 12px;
    margin-right: 11px;
    border: 1px solid #aaa;
    color: #888;
    font-size: 10px;
    line-height: 11px;
    text-align: center;
    flex: none;
}

.bar {
    height: 26px;
    margin-top: 7px;
    background: #f8f8f8;
    display: flex;
    align-items: center;
    gap: 5px;
    padding-right: 6px;
    flex: none;
}

.win-center .bar { margin-top: 12px; }

.sep {
    width: 1px;
    height: 16px;
    background: #bbb;
    flex: none;
}

.fx {
    width: 20px;
    flex: none;
    color: #484848;
    font-family: "Liberation Serif", serif;
    font-style: italic;
    font-weight: bold;
    font-size: 22px;
    line-height: 20px;
    direction: ltr;
    text-align: center;
}

.sigma {
    width: 16px;
    flex: none;
    color: #888;
    font-size: 20px;
    line-height: 20px;
    text-align: center;
}

.bar-more {
    margin-right: auto;
    margin-left: 2px;
    align-self: flex-end;
    width: 8px;
    height: 8px;
    background: #ccc;
    border: 2px solid transparent;
    border-top: 4px solid #333;
    margin-bottom: 1px;
}

.grid-wrap {
    flex: 1;
    margin: 2px 2px 3px;
    border: 1px solid #999;
    background: #fff;
}

.win-center .grid-wrap { margin-top: 1px; }

.grid {
    display: grid;
    grid-auto-rows: 28px;
    font-size: 11px;
}

.grid-type { grid-template-columns: 45px 195px 150px; }
.grid-center { grid-template-columns: 45px 265px 145px 85px; }

.th {
    background: #ececec;
    border-bottom: 1px solid #aaa;
    border-left: 1px solid #aaa;
    color: #999;
    font-size: 11.5px;
    text-align: center;
    line-height: 26px;
}

.th:last-child, .grid-type .th:nth-child(3) { border-left: 0; }

.rh {
    display: flex;
    align-items: center;
    gap: 15px;
    padding-right: 10px;
    color: #444;
    background: #fff;
}

.rh-filter { border-bottom: 1px solid #ccc; }

.td {
    border-bottom: 1px solid #c4c4c4;
    border-left: 1px solid #aaa;
    padding: 0 3px;
    line-height: 26px;
    color: #333;
    background: #fff;
    white-space: nowrap;
}

.td-filter { line-height: 26px; }
.td-cur { background: #fde0bc; }
.td-sel { background: #cbcbcb; }
.td-alt { background: #eee; }

.abc {
    font-family: "DejaVu Sans Mono", monospace;
    font-size: 8px;
    color: #555;
    direction: ltr;
    display: inline-block;
}

.abc b {
    background: #2f9a5d;
    color: #fff;
    font-family: "DejaVu Sans Mono", monospace;
    font-weight: normal;
    padding: 1px;
    margin: 0 1px;
}

.funnel {
    width: 10px;
    height: 10px;
    margin-right: 19px;
    color: #555;
}

.cur {
    width: 0;
    height: 0;
    border: 4px solid transparent;
    border-right: 5px solid #444;
    border-left: 0;
}
```
